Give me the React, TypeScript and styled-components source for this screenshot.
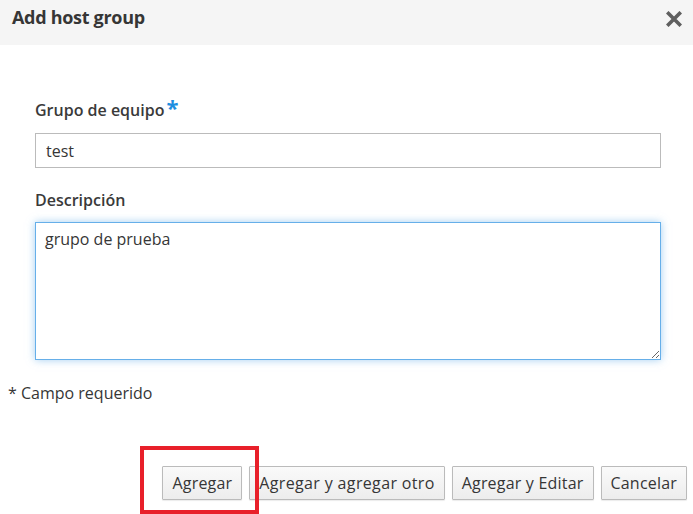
import React from "react";
import styled, { createGlobalStyle } from "styled-components";

const Global = createGlobalStyle`
  html, body { margin: 0; padding: 0; background: #fff; }
  body { font-family: "Open Sans", "Liberation Sans", sans-serif; color: #363636; }
  * { box-sizing: border-box; }
`;

const Dialog = styled.div`
  position: relative;
  width: 693px;
  height: 514px;
  background: #fff;
  display: flex;
  flex-direction: column;
  overflow: hidden;
`;

const Header = styled.div`
  height: 45px;
  background: #f5f5f5;
  display: flex;
  align-items: center;
  justify-content: space-between;
  padding: 0 11px 0 12px;
`;

const Title = styled.h4`
  margin: 0;
  font-size: 18px;
  font-weight: 700;
  color: #363636;
  letter-spacing: -0.3px;
  margin-top: -11px;
`;

const Close = styled.button`
  border: 0;
  background: transparent;
  padding: 0;
  width: 16px;
  height: 16px;
  display: flex;
  margin-top: -8px;
  cursor: pointer;
`;

const Body = styled.div`
  padding: 54px 32px 0 35px;
  display: flex;
  flex-direction: column;
`;

const Label = styled.label`
  font-size: 16px;
  font-weight: 600;
  color: #3a3a3a;
  line-height: 22px;
  display: flex;
  align-items: flex-start;
`;

const Required = styled.span`
  color: #1d8ee0;
  font-size: 22px;
  font-weight: 700;
  line-height: 22px;
  margin-left: 2px;
  margin-top: -3px;
`;

const TextInput = styled.input`
  margin-top: 12px;
  width: 626px;
  height: 35px;
  border: 1px solid #bbb;
  padding: 0 10px;
  font: 400 16px "Open Sans", "Liberation Sans", sans-serif;
  color: #363636;
  outline: none;
`;

const Gap = styled.div<{ $h: number }>`
  height: ${(p) => p.$h}px;
`;

const TextArea = styled.textarea`
  margin-top: 11px;
  width: 626px;
  height: 138px;
  border: 1px solid #66afe9;
  box-shadow: 0 0 8px rgba(102, 175, 233, 0.6);
  padding: 5px 9px;
  font: 400 16px "Open Sans", "Liberation Sans", sans-serif;
  color: #363636;
  outline: none;
  resize: vertical;
`;

const Note = styled.div`
  padding: 22px 0 0 8px;
  font-size: 16px;
  color: #363636;
`;

const Footer = styled.div`
  margin-top: auto;
  padding: 0 6px 14px 0;
  display: flex;
  justify-content: flex-end;
  gap: 7px;
`;

const Button = styled.button<{ $tracking?: number }>`
  height: 34px;
  padding: 0 9px;
  border: 1px solid #bbb;
  border-radius: 1px;
  background: linear-gradient(to bottom, #fafafa 0%, #ededed 100%);
  box-shadow: 0 1px 1px rgba(3, 3, 3, 0.08);
  font: 400 16px "Open Sans", "Liberation Sans", sans-serif;
  letter-spacing: ${(p) => p.$tracking ?? 0.2}px;
  color: #363636;
  cursor: pointer;
`;

const Highlight = styled.div`
  position: absolute;
  left: 140px;
  top: 446px;
  width: 119px;
  height: 68px;
  border: 4px solid #e8202a;
  pointer-events: none;
`;

export default function App() {
  return (
    <>
      <Global />
      <Dialog>
        <Header>
          <Title>Add host group</Title>
          <Close aria-label="Close">
            <svg width="16" height="16" viewBox="0 0 16 16">
              <path d="M2.5 2.5 L13.5 13.5 M13.5 2.5 L2.5 13.5" stroke="#5f5f5f" strokeWidth="3.6" strokeLinecap="square" />
            </svg>
          </Close>
        </Header>
        <Body>
          <Label>
            Grupo de equipo<Required>*</Required>
          </Label>
          <TextInput defaultValue="test" />
          <Gap $h={21} />
          <Label>Descripción</Label>
          <TextArea defaultValue="grupo de prueba" />
        </Body>
        <Note>* Campo requerido</Note>
        <Footer>
          <Button>Agregar</Button>
          <Button $tracking={0.35}>Agregar y agregar otro</Button>
          <Button>Agregar y Editar</Button>
          <Button>Cancelar</Button>
        </Footer>
        <Highlight />
      </Dialog>
    </>
  );
}
